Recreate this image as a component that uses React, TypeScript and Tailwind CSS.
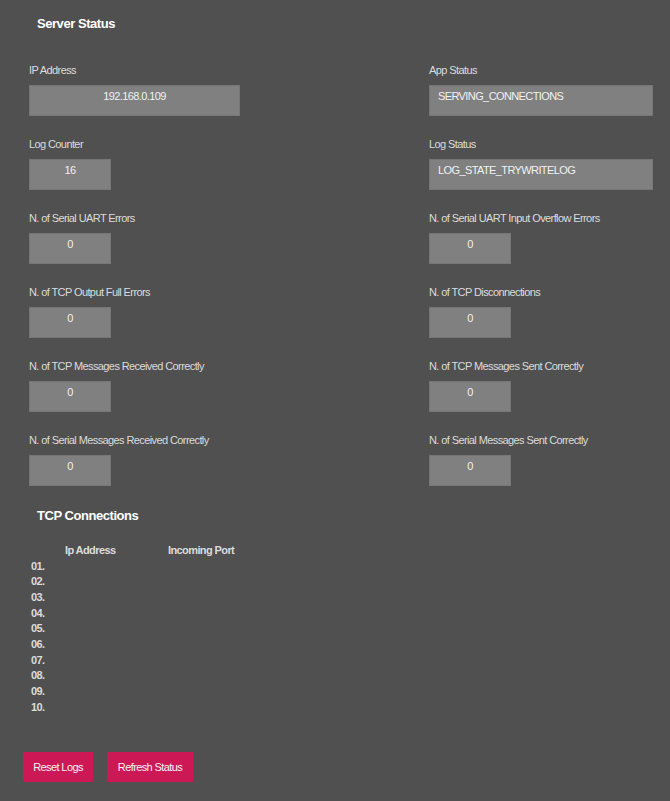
const fields: { label: string; value: string; wide?: boolean; left?: boolean }[] = [
  { label: 'IP Address', value: '192.168.0.109', wide: true },
  { label: 'App Status', value: 'SERVING_CONNECTIONS', wide: true, left: true },
  { label: 'Log Counter', value: '16' },
  { label: 'Log Status', value: 'LOG_STATE_TRYWRITELOG', wide: true, left: true },
  { label: 'N. of Serial UART Errors', value: '0' },
  { label: 'N. of Serial UART Input Overflow Errors', value: '0' },
  { label: 'N. of TCP Output Full Errors', value: '0' },
  { label: 'N. of TCP Disconnections', value: '0' },
  { label: 'N. of TCP Messages Received Correctly', value: '0' },
  { label: 'N. of TCP Messages Sent Correctly', value: '0' },
  { label: 'N. of Serial Messages Received Correctly', value: '0' },
  { label: 'N. of Serial Messages Sent Correctly', value: '0' },
];

const rows = ['01.', '02.', '03.', '04.', '05.', '06.', '07.', '08.', '09.', '10.'];

function Field({ label, value, wide, left }: (typeof fields)[number]) {
  return (
    <div className="mb-[21px]">
      <div className="h-[15px] text-[11px] leading-[15px] tracking-[-0.6px] text-[#dcdcdc]">{label}</div>
      <div
        className={[
          'mt-[7px] h-[31px] border border-[#767676] bg-[#808080] pt-[3px] text-[11px] leading-[15px] tracking-[-0.6px] text-[#f2f2f2]',
          wide ? (left ? 'w-[224px]' : 'w-[211px]') : 'w-[82px]',
          left ? 'pl-[8px] text-left' : 'text-center',
        ].join(' ')}
      >
        {value}
      </div>
    </div>
  );
}

export default function App() {
  return (
    <div
      className="min-h-screen bg-[#505050] pb-[19px]"
      style={{ fontFamily: '"Liberation Sans", Arial, sans-serif' }}
    >
      <h2 className="pl-[37px] pt-[16px] text-[13px] font-bold leading-[16px] tracking-[-0.45px] text-white">
        Server Status
      </h2>

      <div className="mt-[31px] grid grid-cols-[400px_1fr] pl-[29px]">
        {fields.map((f) => (
          <Field key={f.label} {...f} />
        ))}
      </div>

      <h2 className="mt-[1px] pl-[37px] text-[13px] font-bold leading-[16px] tracking-[-0.45px] text-white">
        TCP Connections
      </h2>

      <table className="ml-[29px] mt-[19px] border-separate border-spacing-0 text-[11px] leading-[15.67px] tracking-[-0.6px] text-[#dcdcdc]">
        <thead>
          <tr>
            <th className="w-[36px]" />
            <th className="w-[103px] text-left font-bold">Ip Address</th>
            <th className="text-left font-bold">Incoming Port</th>
          </tr>
        </thead>
        <tbody>
          {rows.map((r) => (
            <tr key={r}>
              <td className="pl-[2px] font-bold">{r}</td>
              <td />
              <td />
            </tr>
          ))}
        </tbody>
      </table>

      <div className="ml-[23px] mt-[37px] flex gap-[14px]">
        <button className="h-[30px] w-[70px] bg-[#cc1955] text-[11px] tracking-[-0.6px] text-[#f4f4f4]">
          Reset Logs
        </button>
        <button className="h-[30px] w-[86px] bg-[#cc1955] text-[11px] tracking-[-0.6px] text-[#f4f4f4]">
          Refresh Status
        </button>
      </div>
    </div>
  );
}
